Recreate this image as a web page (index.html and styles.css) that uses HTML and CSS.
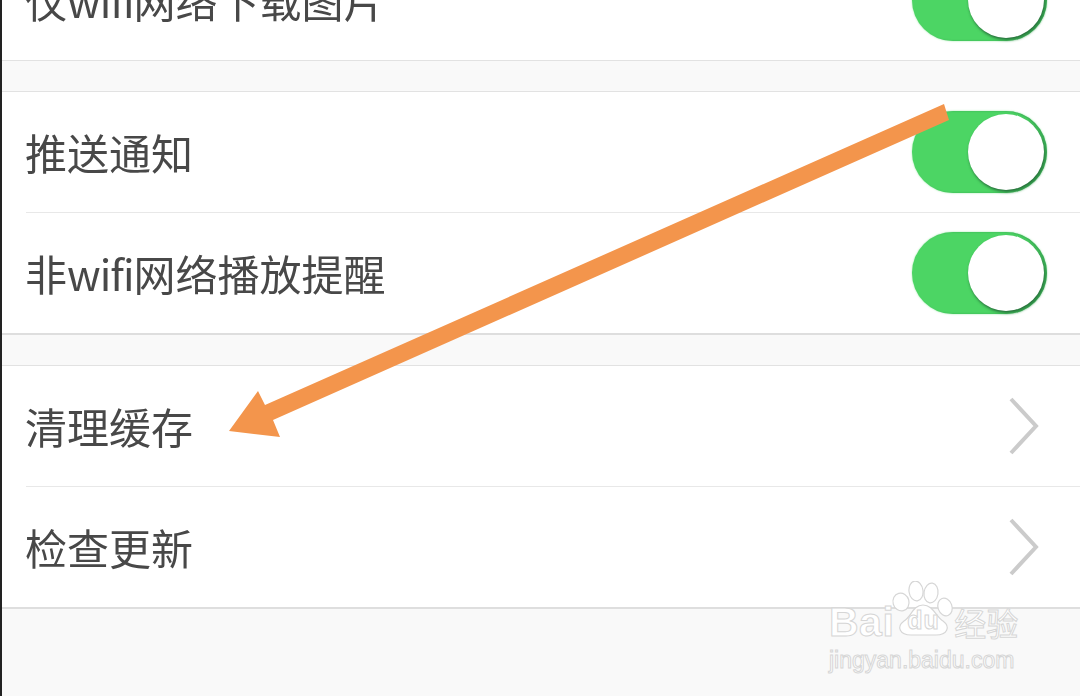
FILE: index.html
```html
<!DOCTYPE html>
<html lang="zh-CN">
<head>
<meta charset="utf-8">
<title>设置</title>
<link rel="stylesheet" href="styles.css">
</head>
<body>
<div class="screen">
    <div class="group group-first">
        <div class="row">
            <span class="label">仅<span class="latin">wifi</span>网络下载图片</span>
            <span class="switch"><span class="knob"></span></span>
        </div>
    </div>

    <div class="group">
        <div class="row">
            <span class="label">推送通知</span>
            <span class="switch"><span class="knob"></span></span>
        </div>
        <div class="row">
            <span class="label">非<span class="latin">wifi</span>网络播放提醒</span>
            <span class="switch"><span class="knob"></span></span>
        </div>
    </div>

    <div class="group">
        <div class="row">
            <span class="label">清理缓存</span>
            <svg class="chevron" viewBox="0 0 32 60"><path d="M3 3 L28 30 L3 57"/></svg>
        </div>
        <div class="row">
            <span class="label">检查更新</span>
            <svg class="chevron" viewBox="0 0 32 60"><path d="M3 3 L28 30 L3 57"/></svg>
        </div>
    </div>
</div>

<!-- annotation drawn over the screenshot -->
<svg class="arrow" viewBox="0 0 1080 696">
    <polygon points="944,104 949,120 273,420 280,437 229,431 258,391 265,405"/>
</svg>

<!-- watermark -->
<div class="mark">
    <svg class="paw" viewBox="0 0 64 58">
        <ellipse cx="10" cy="21" rx="8" ry="9" transform="rotate(-15 10 21)"/>
        <ellipse cx="25" cy="10" rx="7" ry="10" transform="rotate(-8 25 10)"/>
        <ellipse cx="40" cy="12" rx="7" ry="10" transform="rotate(8 40 12)"/>
        <ellipse cx="54" cy="26" rx="7" ry="9" transform="rotate(-20 54 26)"/>
        <path d="M32 24 C22 24 20 36 13 40 C5 46 9 54 20 54 L45 54 C56 54 60 46 52 40 C45 36 42 24 32 24 Z"/>
    </svg>
    <div class="mark-top"><span class="mark-bai">Bai</span><span class="mark-du">du</span><span class="mark-cn">经验</span></div>
    <div class="mark-url">jingyan.baidu.com</div>
</div>
</body>
</html>
```

FILE: styles.css
```css
html, body { margin: 0; padding: 0; height: 100%; overflow: hidden; }
body { background: #f9f9f9; font-family: "Noto Sans CJK SC", "Liberation Sans", sans-serif; position: relative; }

.screen { height: 696px; overflow: hidden; border-left: 2px solid #222; box-sizing: border-box; filter: blur(.4px); }

.group { background: #fff; border-top: 1px solid #e2e2e2; border-bottom: 2px solid #dedede; margin-top: 30px; padding-left: 24px; }
.group-first { border-top: 0; border-bottom: 1px solid #e2e2e2; margin-top: -60px; }

.row { height: 120px; display: flex; align-items: center; justify-content: space-between; padding-right: 33px; border-bottom: 1px solid #e8e8e8; }
.row:last-child { border-bottom: 0; }

.label { font-size: 42px; font-weight: 400; color: #484848; white-space: nowrap; margin-left: -1px; padding-bottom: 2px; }
.latin { letter-spacing: -1px; }

.switch { width: 135px; height: 82px; border-radius: 41px; background: #4cd564; display: flex; align-items: center; justify-content: flex-end; padding-right: 3px; box-sizing: border-box; box-shadow: 0 0 2px rgba(76, 213, 100, .6), inset -2px 0 2px rgba(40, 130, 70, .5); }
.knob { width: 76px; height: 76px; border-radius: 50%; background: #fff; box-shadow: 1px 2px 3px rgba(30, 90, 50, .85); }

.chevron { width: 32px; height: 60px; margin-right: 7px; fill: none; stroke: #cbcbcb; stroke-width: 4; }

.arrow { position: absolute; left: 0; top: 0; width: 1080px; height: 696px; }
.arrow polygon { fill: #f3954c; }

.mark { position: absolute; left: 829px; top: 581px; width: 195px; color: #fff; -webkit-text-stroke: 1px #d6d6d6; }
.paw { position: absolute; left: 62px; top: 0; width: 64px; height: 58px; fill: #fff; stroke: #d6d6d6; stroke-width: 1.2; }
.mark-top { position: relative; display: flex; align-items: baseline; height: 62px; font-family: "Liberation Sans", sans-serif; font-weight: 700; }
.mark-bai { font-size: 41px; line-height: 82px; letter-spacing: .5px; }
.mark-du { font-size: 25px; margin-left: 13px; width: 47px; position: relative; top: -7px; letter-spacing: 1px; }
.mark-cn { font-family: "Noto Sans CJK SC", sans-serif; font-size: 32px; font-weight: 400; }
.mark-url { font-family: "Liberation Sans", sans-serif; font-size: 23px; margin-top: 4px; white-space: nowrap; }
```
